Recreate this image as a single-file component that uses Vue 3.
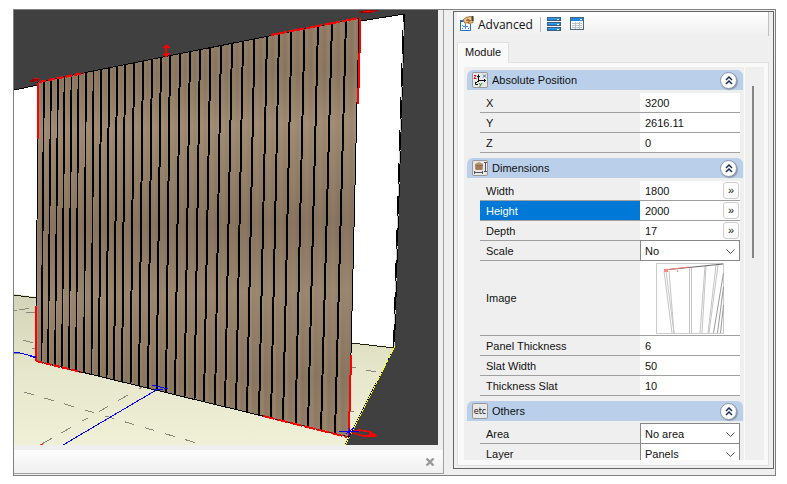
<script setup>
import { ref } from 'vue'

// x of every groove where it meets the top and the bottom edge of the panel
const grooveTop = [44, 51, 58, 64.5, 71.5, 78.5, 86, 93.5, 101, 109, 117, 125, 134, 143, 152, 161, 170, 180, 190, 200, 210.5, 221, 232, 243, 254.5, 267, 279, 291.5, 304.5, 318, 332, 346]
const grooveBottom = [41.5, 48, 55, 62, 69, 76, 84, 91.5, 99, 106.5, 114, 122, 130.5, 139, 148, 156.5, 166, 175, 184.5, 194.5, 204, 215, 225, 236, 247, 259, 271, 283, 295.5, 308, 321, 335]

const topY = (x) => 82 - (x - 38) * 0.2
const bottomY = (x) => 361 + (x - 36) * 0.243

const grooves = grooveTop.map((x, i) => {
  const b = grooveBottom[i]
  return { x1: x, y1: topY(x), x2: b, y2: bottomY(b), w: i < 8 ? 1.7 : 2 }
})

const tops = [38, ...grooveTop, 359]
const bottoms = [36, ...grooveBottom, 349]
const slats = tops.slice(0, -1).map((t, i) => {
  const t2 = tops[i + 1]
  const b = bottoms[i]
  const b2 = bottoms[i + 1]
  return `${t},${topY(t)} ${t2},${topY(t2)} ${b2},${bottomY(b2)} ${b},${bottomY(b)}`
})

const sections = ref([
  {
    title: 'Absolute Position',
    icon: 'axes',
    open: true,
    rows: [
      { id: 'x', label: 'X', value: '3200' },
      { id: 'y', label: 'Y', value: '2616.11' },
      { id: 'z', label: 'Z', value: '0' },
    ],
  },
  {
    title: 'Dimensions',
    icon: 'size',
    open: true,
    rows: [
      { id: 'width', label: 'Width', value: '1800', more: true },
      { id: 'height', label: 'Height', value: '2000', more: true },
      { id: 'depth', label: 'Depth', value: '17', more: true },
      { id: 'scale', label: 'Scale', value: 'No', options: ['No', 'Yes'] },
      { id: 'image', label: 'Image', preview: true },
      { id: 'panel', label: 'Panel Thickness', value: '6' },
      { id: 'slat', label: 'Slat Width', value: '50' },
      { id: 'thickness', label: 'Thickness Slat', value: '10' },
    ],
  },
  {
    title: 'Others',
    icon: 'etc',
    open: true,
    rows: [
      { id: 'area', label: 'Area', value: 'No area', options: ['No area'] },
      { id: 'layer', label: 'Layer', value: 'Panels', options: ['Panels'] },
    ],
  },
])

const selected = ref('height')
</script>

<template>
  <div class="page">
    <main class="frame">
      <section class="view">
        <svg class="scene" viewBox="14 10 424 435" preserveAspectRatio="xMinYMin slice">
          <defs>
            <linearGradient id="floor" x1="0" y1="0" x2="0" y2="1">
              <stop offset="0" stop-color="#d3d3b8" />
              <stop offset="0.5" stop-color="#e6e6cb" />
              <stop offset="1" stop-color="#f0f0d8" />
            </linearGradient>
            <linearGradient id="wood" x1="0" y1="0" x2="1" y2="0">
              <stop offset="0" stop-color="#8a7761" />
              <stop offset="0.16" stop-color="#a8927a" />
              <stop offset="0.3" stop-color="#927e67" />
              <stop offset="0.5" stop-color="#99856d" />
              <stop offset="0.7" stop-color="#8c7861" />
              <stop offset="0.85" stop-color="#9d8871" />
              <stop offset="1" stop-color="#86725c" />
            </linearGradient>
            <linearGradient id="grain" gradientUnits="userSpaceOnUse" x1="150" y1="20" x2="160" y2="430">
              <stop offset="0" stop-color="#8c7860" stop-opacity="0.3" />
              <stop offset="0.13" stop-color="#7d6953" stop-opacity="0.35" />
              <stop offset="0.26" stop-color="#ac957e" stop-opacity="0.5" />
              <stop offset="0.4" stop-color="#8f7b65" stop-opacity="0.4" />
              <stop offset="0.5" stop-color="#75624f" stop-opacity="0.4" />
              <stop offset="0.67" stop-color="#a08a75" stop-opacity="0.5" />
              <stop offset="0.78" stop-color="#8b7561" stop-opacity="0.4" />
              <stop offset="0.88" stop-color="#78644f" stop-opacity="0.4" />
              <stop offset="1" stop-color="#8c7560" stop-opacity="0.4" />
            </linearGradient>
          </defs>

          <rect x="14" y="10" width="424" height="435" fill="#404040" />
          <polygon points="14,90 361,21 404,14 394,348 14,348" fill="#fff" />
          <polygon points="14,294 36,297 352,343 394,348 345,445 14,445" fill="url(#floor)" />

          <g fill="none" stroke="#88887a" shape-rendering="crispEdges">
            <path d="M14 310h3M19 310l6 -1 4 -1M26 312l9 1M23 340l10 3M32 348h4M14 354l3 -1 5 0" />
            <path d="M24 392L200 444" stroke-dasharray="10 11" />
            <path d="M144 386L40 445" stroke-dasharray="6 13 11 11 11 13" />
            <path d="M352 367l4 1M366 370l10 2M350 411h4" />
          </g>
          <path d="M40 445l3 -1" stroke="#f00" />

          <g fill="none" stroke="#000" shape-rendering="crispEdges">
            <path d="M14 90L38 85M361 21L404 14" />
            <path d="M14 295L36 298M352 343L394 348" stroke="#202008" />
            <path d="M404 14L394 347" stroke-width="2" />
            <path d="M404 22L394 347" stroke="#ccc" stroke-dasharray="14 18" />
            <path d="M394 348L345 445" />
            <path d="M395 346L345 446" stroke="#ff0" stroke-dasharray="4 1" />
          </g>

          <polygon v-for="(points, i) in slats" :key="i" :points="points" fill="url(#wood)" />
          <polygon points="38,82 359,18 349,437 36,361" fill="url(#grain)" />

          <g stroke="#000" shape-rendering="crispEdges">
            <line
              v-for="(g, i) in grooves"
              :key="i"
              :x1="g.x1"
              :y1="g.y1"
              :x2="g.x2"
              :y2="g.y2"
              :stroke-width="g.w"
            />
            <path d="M38 82L359 18L349 437L36 361Z" fill="none" />
          </g>

          <g fill="none" stroke="#f00" stroke-width="2" shape-rendering="crispEdges">
            <path d="M38 83V139M36 306V361M360 18V53M359 53V88M358 88V104" />
            <path d="M351 355V375M350 375V411M349 411V436" stroke-width="1.5" />
            <path d="M39 82L84 73" stroke-dasharray="7 2" />
            <path d="M271 35L359 18" stroke-dasharray="16 2" />
            <path d="M36 361L81 372" stroke-dasharray="7 2" />
            <path d="M263 416L347 437" stroke-dasharray="12 2" />
          </g>
          <g shape-rendering="crispEdges">
            <path d="M166 44l4 4h-3v5h3l-4 5 -4 -4h3v-6h-3z" fill="#f00" />
            <path d="M30 80l9 -2v2l-5 2h-4z" fill="#900" />
            <path d="M34 79l5 -1" stroke="#f00" />
            <path d="M359 12l7 -2h13l-8 3h-12z" fill="#900" />
            <path d="M363 11h11" stroke="#f00" />
            <path d="M351 432l8 -2 12 2M353 433l10 3h8" fill="none" stroke="#f00" stroke-width="1.5" />
            <path d="M369 431l8 4 -2 2h-6z" fill="#f00" />
          </g>
          <g fill="none" stroke="#00f" shape-rendering="crispEdges">
            <path d="M14 352l6 1 16 4M30 356l6 2" />
            <path d="M158 389L63 445M152 385l4 1 12 3M154 389h9" />
            <path d="M339 431h20M349 428v8M346 434l8 -6" />
          </g>
        </svg>

        <footer class="dock">
          <button class="dock-close" type="button" aria-label="Close">
            <svg viewBox="0 0 10 8" width="10" height="8">
              <path d="M1.5 0.5L8.5 7.5M8.5 0.5L1.5 7.5" stroke="#999" stroke-width="2.4" />
            </svg>
          </button>
        </footer>
      </section>

      <aside class="panel">
        <header class="toolbar">
          <button class="tool" type="button">
            <svg viewBox="0 0 16 16" width="16" height="16">
              <path d="M1.5 5V14.5H11.5V8" fill="#fff" stroke="#1b74c5" />
              <path d="M1 5h5" stroke="#1b74c5" stroke-width="2" />
              <path d="M6.5 8v5M4 10.5h5" stroke="#3a8fd8" />
              <path d="M3 9.5h1M9 12.5h1M3 12.5h1" stroke="#3a8fd8" />
              <path d="M4 4L7 1.500l4 -1 3 1v5l-4 1 -2 -1 -2 1 -1 -2z" fill="#ecc48a" stroke="#a87434" />
              <path d="M7 4l3 1M8 3l4 2M9 6.500l2 -1" stroke="#8c5c28" fill="none" />
              <path d="M12.500 0h2v5h-2z" fill="#444" />
            </svg>
            <span>Advanced</span>
          </button>
          <span class="divider"></span>
          <button class="tool" type="button" aria-label="List view">
            <svg viewBox="0 0 14 14" width="14" height="14" shape-rendering="crispEdges">
              <g fill="#1e88dc" stroke="#3c5e80">
                <rect x="0.5" y="0.5" width="13" height="3" />
                <rect x="0.5" y="5.5" width="13" height="3" />
                <rect x="0.5" y="10.5" width="13" height="3" />
              </g>
              <path d="M1 1.500h12M1 6.500h12M1 11.500h12" stroke="#2f9cf0" />
              <path d="M10 2h2M10 7h2M10 12h2" stroke="#fff" />
            </svg>
          </button>
          <button class="tool" type="button" aria-label="Table view">
            <svg viewBox="0 0 14 14" width="14" height="14" shape-rendering="crispEdges">
              <rect x="0.5" y="0.5" width="13" height="12" fill="#fff" stroke="#4c6378" />
              <path d="M1 2.500h12" stroke="#1e88dc" stroke-width="3" />
              <path d="M10 2h2" stroke="#fff" />
              <path d="M5.5 5v7M9.5 5v7M2 6.5h10M2 8.5h10M2 10.5h10" stroke="#b8c2cc" />
            </svg>
          </button>
        </header>

        <nav class="tabs">
          <button class="tab" type="button">Module</button>
        </nav>

        <div class="sheet">
          <div class="list">
            <section v-for="section in sections" :key="section.title" class="group">
              <h2 class="group-hdr">
                <span class="group-icon">
                  <svg v-if="section.icon === 'axes'" viewBox="0 0 16 16" width="16" height="16">
                    <path d="M6.5 10V2.5M5 4.500h3M6 8.5H14M12.500 7v3M6 9l-3 3M3.500 10v2.500H6" fill="none" stroke="#111" />
                    <path d="M2 3.500h2l-2 3h2.500" fill="none" stroke="#d01818" />
                    <path d="M11 2.5l3 3M14 2.5l-3 3" stroke="#2a76b8" />
                    <path d="M7 11l1.500 2M10 11l-2.500 4" stroke="#2f9a2f" />
                  </svg>
                  <svg v-else-if="section.icon === 'size'" viewBox="0 0 16 16" width="16" height="16">
                    <path d="M3 4l4 -2 4 2v5l-1 1H4L3 9z" fill="#b8926c" />
                    <path d="M4 5l3 1 4 -1M5 6v4M7 6v4M9 6v4" stroke="#8a6848" fill="none" />
                    <path d="M2.500 11v3M10.500 11v3M3 12.500h7M12 2.500h3M12 11.500h3M13.500 3v8" stroke="#555" fill="none" />
                  </svg>
                  <span v-else class="etc">etc</span>
                </span>
                <span class="group-title">{{ section.title }}</span>
                <button
                  class="collapse"
                  type="button"
                  :aria-label="section.title"
                  :aria-expanded="section.open"
                  @click="section.open = !section.open"
                >
                  <svg viewBox="0 0 8 9" width="8" height="9">
                    <path d="M1 4l3 -3 3 3M1 8l3 -3 3 3" fill="none" stroke="#1c2f63" stroke-width="1.5" />
                  </svg>
                </button>
              </h2>
              <div v-show="section.open" class="rows">
                <div
                  v-for="row in section.rows"
                  :key="row.id"
                  class="row"
                  :class="{ selected: selected === row.id, tall: row.preview }"
                  @click="selected = row.id"
                >
                  <span v-if="row.preview" class="name">{{ row.label }}</span>
                  <label v-else class="name" :for="row.id">{{ row.label }}</label>
                  <div class="cell" :class="{ combo: row.options }">
                    <template v-if="row.options">
                      <select :id="row.id" v-model="row.value" class="field">
                        <option v-for="o in row.options" :key="o">{{ o }}</option>
                      </select>
                      <svg class="chevron" viewBox="0 0 9 5" width="9" height="5">
                        <path d="M0.500 0.500l4 4 4 -4" fill="none" stroke="#555" />
                      </svg>
                    </template>
                    <svg v-else-if="row.preview" class="preview" viewBox="0 0 68 71" width="68" height="71">
                      <rect x="0.5" y="0.5" width="67" height="70" fill="#fff" stroke="#ccc" />
                      <g fill="none" stroke="#c4c4c4">
                        <path d="M8 8l8 62M10 8l8 62M13 8l5 62M33.500 5v65M35.500 5v65M49 3l-5 67M50 3l-4 67M60 2l-8 68M62 2l-9 68" />
                        <path d="M67.500 10l-10 60M67.500 24l-6 46M67.500 42l-3 28" stroke="#999" />
                        <path d="M8 7L67 1" stroke="#666" />
                      </g>
                      <path d="M8 7l25 -3" stroke="#f77" />
                      <path d="M8 6h4v3h-4zM21 7h1v2h-1z" fill="#f88" />
                    </svg>
                    <input v-else :id="row.id" v-model="row.value" class="field" type="text" />
                    <button v-if="row.more" class="more" type="button" :aria-label="row.label + ' options'">»</button>
                  </div>
                </div>
              </div>
            </section>
          </div>
          <div class="scroll">
            <div class="thumb"></div>
          </div>
        </div>
      </aside>
    </main>
  </div>
</template>

<style>
body {
  background: #fff;
}
</style>

<style scoped>
* {
  box-sizing: border-box;
}
button {
  border: none;
  background: none;
  padding: 0;
  font: inherit;
  color: inherit;
}
.page {
  height: 100vh;
  padding: 9px 11px 8px 13px;
  font-family: "Liberation Sans", Arial, sans-serif;
  font-size: 11px;
  color: #111;
}
.frame {
  display: flex;
  gap: 9px;
  height: 100%;
  border: 1px solid #808080;
  background: #efefef;
}
.view {
  flex: 1;
  min-width: 0;
  display: flex;
  flex-direction: column;
  gap: 5px;
  margin-bottom: 1px;
  border-right: 1px solid #a0a0a0;
  border-bottom: 1px solid #a0a0a0;
}
.scene {
  display: block;
  flex: 1;
  min-height: 0;
  margin-right: 5px;
}
.dock {
  display: flex;
  align-items: center;
  justify-content: flex-end;
  height: 23px;
  padding-right: 8px;
  background: linear-gradient(#fdfdfd, #f0f0f0);
}
.dock-close {
  display: flex;
}
.panel {
  flex: none;
  width: 321px;
  display: flex;
  flex-direction: column;
  margin: 1px 1px 6px 0;
  padding: 0 4px 2px 3px;
  border: 1px solid #646464;
}
.toolbar {
  display: flex;
  align-items: center;
  gap: 9px;
  height: 24px;
  padding-left: 2px;
  border-right: 1px solid #c0c0c0;
  background: linear-gradient(#fff, #efefef);
}
.tool {
  display: flex;
  align-items: center;
  gap: 3px;
  font-family: "Open Sans", "Noto Sans", sans-serif;
  font-size: 12px;
}
.divider {
  width: 1px;
  height: 15px;
  margin: 0 -3px 0 -2px;
  background: #bbb;
}
.tabs {
  display: flex;
  margin-top: 6px;
}
.tab {
  height: 21px;
  margin-bottom: -1px;
  padding: 0 7px 2px;
  border: 1px solid #e0e0e0;
  border-bottom: none;
  background: #f9f9f9;
  position: relative;
}
.sheet {
  flex: 1;
  min-height: 0;
  display: flex;
  padding: 4px 4px 5px 6px;
  border: 1px solid #e0e0e0;
  background: #f9f9f9;
}
.list {
  flex: 1;
  min-width: 0;
  overflow: hidden;
  padding: 3px 1px 0 3px;
  border-right: 1px solid #fbfbfb;
  background: #efefef;
}
.group {
  margin-bottom: 5px;
}
.group-hdr {
  display: flex;
  align-items: center;
  gap: 4px;
  height: 20px;
  margin: 0 0 3px;
  padding: 0 6px 0 5px;
  border-radius: 6px 6px 0 0;
  background: #bad0ea;
  font-size: 11px;
  font-weight: normal;
}
.group-icon {
  display: flex;
  align-items: center;
  justify-content: center;
  width: 16px;
  height: 16px;
  border-radius: 2px;
  background: #e8e8e8;
  box-shadow: inset 0 0 0 1px #999;
}
.etc {
  font-family: "DejaVu Sans", sans-serif;
  font-size: 8px;
}
.group-title {
  flex: 1;
}
.collapse {
  display: flex;
  align-items: center;
  justify-content: center;
  width: 17px;
  height: 17px;
  border: 1px solid #8b95a8;
  border-radius: 50%;
  background: #fff;
  box-shadow: 1px 1px 1px #8c9ab0;
}
.rows {
  padding: 0 3px 0 13px;
}
.row {
  display: flex;
  height: 20px;
  border-bottom: 1px solid #a0a0a0;
}
.row.tall {
  height: 75px;
}
.name {
  flex: 1;
  display: flex;
  align-items: center;
  padding-left: 6px;
}
.selected .name {
  background: #0078d7;
  color: #fff;
}
.cell {
  display: flex;
  align-items: center;
  justify-content: center;
  width: 100px;
  background: #fff;
}
.field {
  flex: 1;
  align-self: stretch;
  min-width: 0;
  padding: 0 0 0 5px;
  border: none;
  outline: none;
  appearance: none;
  background: transparent;
  font: inherit;
  color: #111;
}
.combo {
  position: relative;
  margin: -1px 0;
  border: 1px solid #888;
}
.combo .field {
  padding-left: 4px;
}
.chevron {
  position: absolute;
  right: 4px;
  top: 8px;
  pointer-events: none;
}
.more {
  width: 16px;
  height: 17px;
  margin-right: 1px;
  border: 1px solid #ccc;
  border-radius: 3px;
  background: #fdfdfd;
  line-height: 15px;
}
.scroll {
  width: 19px;
  padding: 19px 0 0 7px;
  background: #efefef;
}
.thumb {
  width: 2px;
  height: 46%;
  background: #858585;
}
</style>
